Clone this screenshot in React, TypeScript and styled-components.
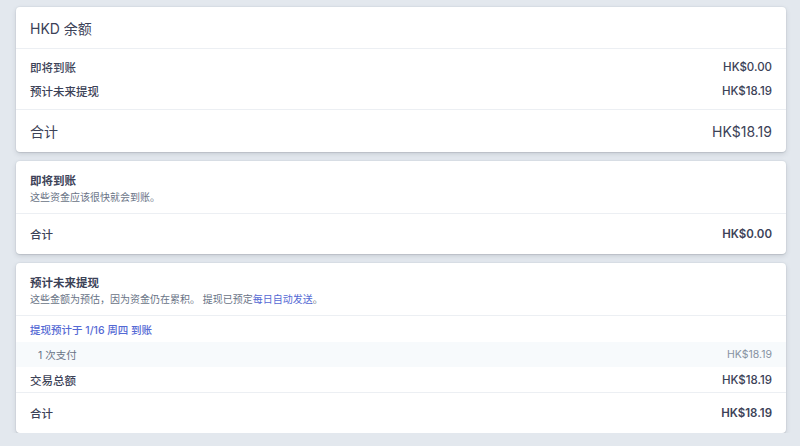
import * as React from 'react';
import styled, { createGlobalStyle } from 'styled-components';

const GlobalStyle = createGlobalStyle`
  html, body {
    margin: 0;
    padding: 0;
    background: #e3e8ee;
  }
  body {
    font-family: Inter, "Noto Sans CJK SC", sans-serif;
    color: #3c4257;
    -webkit-font-smoothing: antialiased;
  }
`;

const Page = styled.div`
  display: flex;
  flex-direction: column;
  gap: 9px;
  padding: 7px 14px 0 16px;
`;

const Card = styled.div`
  background: #fff;
  border-radius: 4px;
  box-shadow: 0 0 0 1px rgba(136, 152, 170, 0.08), 0 2px 5px rgba(60, 66, 87, 0.16),
    0 1px 1px rgba(0, 0, 0, 0.08);
  overflow: hidden;
`;

const Header = styled.div`
  height: 42px;
  display: flex;
  align-items: center;
  padding: 0 14px;
  font-size: 14px;
  color: #3c4257;
  border-bottom: 1px solid #eceff3;
  box-sizing: border-box;
`;

const Intro = styled.div`
  height: 53px;
  box-sizing: border-box;
  padding: 12px 14px 0;
  border-bottom: 1px solid #eceff3;
`;

const Title = styled.div`
  font-size: 11.5px;
  line-height: 16px;
  font-weight: 600;
  color: #3c4257;
`;

const Sub = styled.div`
  font-size: 10px;
  line-height: 16px;
  color: #697386;
`;

const Link = styled.span`
  color: #5469d4;
`;

const Rows = styled.div`
  padding: 6px 0;
  border-bottom: 1px solid #eceff3;
`;

const Row = styled.div<{ $shade?: boolean; $indent?: boolean; $h?: number; $rule?: boolean }>`
  height: ${(p) => p.$h ?? 24}px;
  display: flex;
  align-items: center;
  justify-content: space-between;
  padding: 0 14px 0 ${(p) => (p.$indent ? 22 : 14)}px;
  background: ${(p) => (p.$shade ? '#f7fafc' : 'transparent')};
  border-bottom: ${(p) => (p.$rule ? '1px solid #eceff3' : 'none')};
`;

const Label = styled.span<{ $muted?: boolean }>`
  font-size: ${(p) => (p.$muted ? 10.5 : 11.5)}px;
  font-weight: ${(p) => (p.$muted ? 400 : 500)};
  color: ${(p) => (p.$muted ? '#697386' : '#3c4257')};
`;

const Amount = styled.span<{ $muted?: boolean }>`
  font-size: ${(p) => (p.$muted ? 10.5 : 11.5)}px;
  font-weight: ${(p) => (p.$muted ? 400 : 500)};
  color: ${(p) => (p.$muted ? '#8792a2' : '#3c4257')};
`;

const LinkRow = styled.div`
  height: 26px;
  display: flex;
  align-items: center;
  padding: 0 14px;
  font-size: 10.5px;
  font-weight: 500;
  color: #5469d4;
`;

const Total = styled.div<{ $big?: boolean }>`
  height: ${(p) => (p.$big ? 42 : 40)}px;
  display: flex;
  align-items: center;
  justify-content: space-between;
  padding: 0 14px;
  font-size: ${(p) => (p.$big ? 14 : 11.5)}px;
  font-weight: ${(p) => (p.$big ? 400 : 500)};
  color: #3c4257;
`;

const TotalAmount = styled.span<{ $big?: boolean }>`
  font-size: ${(p) => (p.$big ? 14 : 11.5)}px;
  font-weight: ${(p) => (p.$big ? 400 : 600)};
`;

const App = () => {
  return (
    <>
      <GlobalStyle />
      <Page>
        <Card>
          <Header>HKD 余额</Header>
          <Rows>
            <Row>
              <Label>即将到账</Label>
              <Amount>HK$0.00</Amount>
            </Row>
            <Row>
              <Label>预计未来提现</Label>
              <Amount>HK$18.19</Amount>
            </Row>
          </Rows>
          <Total $big>
            <span>合计</span>
            <TotalAmount $big>HK$18.19</TotalAmount>
          </Total>
        </Card>

        <Card>
          <Intro>
            <Title>即将到账</Title>
            <Sub>这些资金应该很快就会到账。</Sub>
          </Intro>
          <Total>
            <span>合计</span>
            <TotalAmount>HK$0.00</TotalAmount>
          </Total>
        </Card>

        <Card>
          <Intro>
            <Title>预计未来提现</Title>
            <Sub>
              这些金额为预估，因为资金仍在累积。 提现已预定<Link>每日自动发送</Link>。
            </Sub>
          </Intro>
          <LinkRow>提现预计于 1/16 周四 到账</LinkRow>
          <Row $shade $indent $h={25}>
            <Label $muted>1 次支付</Label>
            <Amount $muted>HK$18.19</Amount>
          </Row>
          <Row $h={25} $rule>
            <Label>交易总额</Label>
            <Amount>HK$18.19</Amount>
          </Row>
          <Total>
            <span>合计</span>
            <TotalAmount>HK$18.19</TotalAmount>
          </Total>
        </Card>
      </Page>
    </>
  );
};

export default App;
